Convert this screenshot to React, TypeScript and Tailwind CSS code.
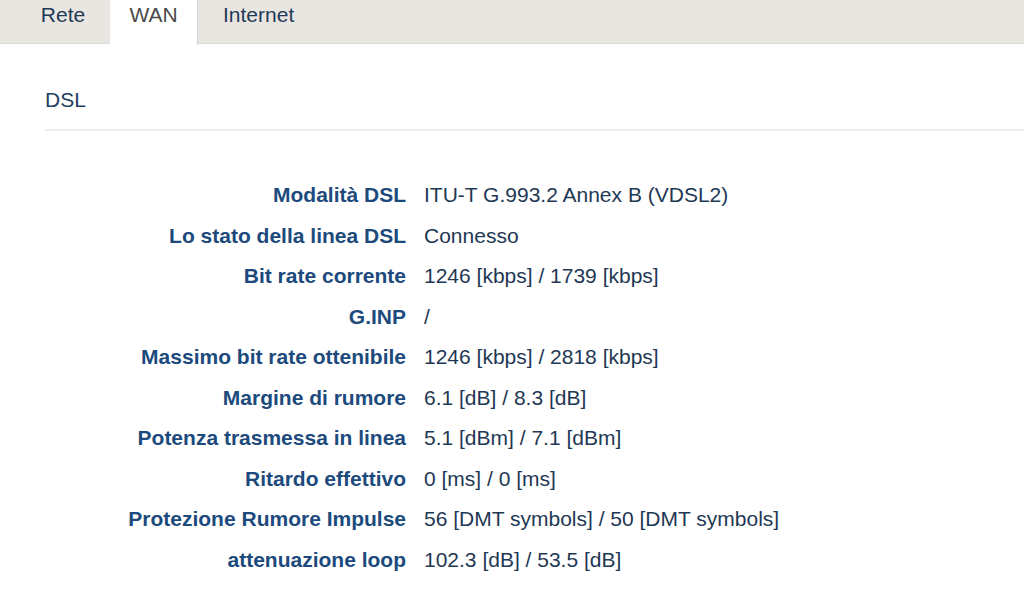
import React from "react";

const rows: [string, string][] = [
  ["Modalità DSL", "ITU-T G.993.2 Annex B (VDSL2)"],
  ["Lo stato della linea DSL", "Connesso"],
  ["Bit rate corrente", "1246 [kbps] / 1739 [kbps]"],
  ["G.INP", "/"],
  ["Massimo bit rate ottenibile", "1246 [kbps] / 2818 [kbps]"],
  ["Margine di rumore", "6.1 [dB] / 8.3 [dB]"],
  ["Potenza trasmessa in linea", "5.1 [dBm] / 7.1 [dBm]"],
  ["Ritardo effettivo", "0 [ms] / 0 [ms]"],
  ["Protezione Rumore Impulse", "56 [DMT symbols] / 50 [DMT symbols]"],
  ["attenuazione loop", "102.3 [dB] / 53.5 [dB]"],
];

export default function App() {
  return (
    <div
      className="w-[1024px] h-[589px] bg-white overflow-hidden"
      style={{ fontFamily: '"Liberation Sans", Arial, sans-serif' }}
    >
      <div className="flex h-[44px] bg-[#e9e5e1] border-b border-[#dcdcdc]">
        <div className="w-[20px]" />
        <div className="w-[90px] flex justify-center pt-[3px] pr-[4px] text-[21px] leading-[24px] text-[#1f3a57]">
          Rete
        </div>
        <div className="w-[88px] h-[45px] bg-white border-r border-[#d6d6d6] flex justify-center pt-[3px] text-[21px] leading-[24px] text-[#4a4a4a]">
          WAN
        </div>
        <div className="flex pt-[3px] pl-[25px] text-[21px] leading-[24px] text-[#1f3a57]">
          Internet
        </div>
      </div>
      <div className="pl-[45px]">
        <div className="h-[87px] border-b-2 border-[#ececec] flex items-end pb-[17px] text-[21px] leading-[24px] text-[#1f3e60]">
          DSL
        </div>
        <div className="pt-[52px] flex flex-col">
          {rows.map(([k, v]) => (
            <div key={k} className="flex h-[40.56px] items-start leading-[24px]">
              <div className="w-[361px] text-right font-bold text-[21px] text-[#1d4a7c]">{k}</div>
              <div className="pl-[18px] text-[21px] text-[#1f3854]">{v}</div>
            </div>
          ))}
        </div>
      </div>
    </div>
  );
}
